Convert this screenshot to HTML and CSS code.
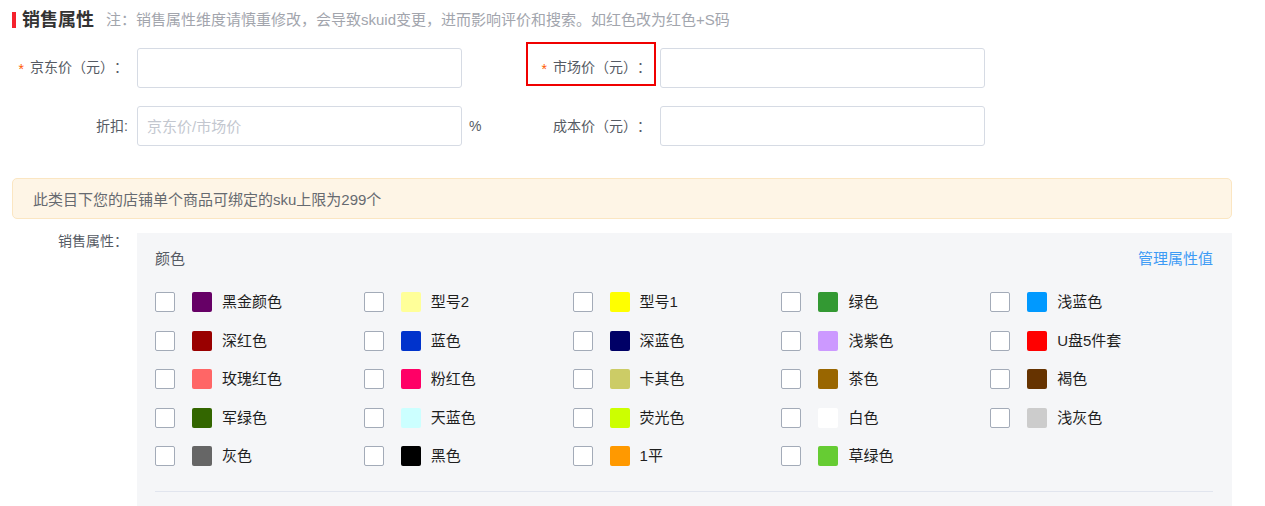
FILE: index.html
```html
<!DOCTYPE html>
<html lang="zh-CN">
<head>
<meta charset="utf-8">
<title>销售属性</title>
<link rel="stylesheet" href="styles.css">
</head>
<body>
<div class="page">
  <div class="title-row">
    <span class="title-bar"></span>
    <span class="title">销售属性</span>
    <span class="note">注：销售属性维度请慎重修改，会导致skuid变更，进而影响评价和搜索。如红色改为红色+S码</span>
  </div>

  <div class="form">
    <div class="form-row">
      <div class="field">
        <label class="label"><span class="star">*</span>京东价（元）：</label>
        <input class="input" type="text">
      </div>
      <div class="suffix"></div>
      <div class="field">
        <label class="label"><span class="star">*</span>市场价（元）：</label>
        <input class="input" type="text">
      </div>
      <div class="highlight"></div>
    </div>
    <div class="form-row">
      <div class="field">
        <label class="label">折扣:</label>
        <input class="input" type="text" placeholder="京东价/市场价">
      </div>
      <div class="suffix">%</div>
      <div class="field">
        <label class="label">成本价（元）：</label>
        <input class="input" type="text">
      </div>
    </div>
  </div>

  <div class="alert">此类目下您的店铺单个商品可绑定的sku上限为299个</div>

  <div class="attr-row">
    <div class="label attr-label">销售属性：</div>
    <div class="panel">
      <div class="panel-head">
        <span class="panel-title">颜色</span>
        <a class="manage" href="#">管理属性值</a>
      </div>
      <div class="grid">
        <div class="item"><span class="cb"></span><span class="sw" style="background:#660066"></span><span class="name">黑金颜色</span></div>
        <div class="item"><span class="cb"></span><span class="sw" style="background:#ffff99"></span><span class="name">型号2</span></div>
        <div class="item"><span class="cb"></span><span class="sw" style="background:#ffff00"></span><span class="name">型号1</span></div>
        <div class="item"><span class="cb"></span><span class="sw" style="background:#339933"></span><span class="name">绿色</span></div>
        <div class="item"><span class="cb"></span><span class="sw" style="background:#0099ff"></span><span class="name">浅蓝色</span></div>

        <div class="item"><span class="cb"></span><span class="sw" style="background:#990000"></span><span class="name">深红色</span></div>
        <div class="item"><span class="cb"></span><span class="sw" style="background:#0033cc"></span><span class="name">蓝色</span></div>
        <div class="item"><span class="cb"></span><span class="sw" style="background:#000066"></span><span class="name">深蓝色</span></div>
        <div class="item"><span class="cb"></span><span class="sw" style="background:#cc99ff"></span><span class="name">浅紫色</span></div>
        <div class="item"><span class="cb"></span><span class="sw" style="background:#ff0000"></span><span class="name">U盘5件套</span></div>

        <div class="item"><span class="cb"></span><span class="sw" style="background:#ff6666"></span><span class="name">玫瑰红色</span></div>
        <div class="item"><span class="cb"></span><span class="sw" style="background:#ff0066"></span><span class="name">粉红色</span></div>
        <div class="item"><span class="cb"></span><span class="sw" style="background:#cccc66"></span><span class="name">卡其色</span></div>
        <div class="item"><span class="cb"></span><span class="sw" style="background:#996600"></span><span class="name">茶色</span></div>
        <div class="item"><span class="cb"></span><span class="sw" style="background:#663300"></span><span class="name">褐色</span></div>

        <div class="item"><span class="cb"></span><span class="sw" style="background:#336600"></span><span class="name">军绿色</span></div>
        <div class="item"><span class="cb"></span><span class="sw" style="background:#ccffff"></span><span class="name">天蓝色</span></div>
        <div class="item"><span class="cb"></span><span class="sw" style="background:#ccff00"></span><span class="name">荧光色</span></div>
        <div class="item"><span class="cb"></span><span class="sw" style="background:#ffffff"></span><span class="name">白色</span></div>
        <div class="item"><span class="cb"></span><span class="sw" style="background:#cccccc"></span><span class="name">浅灰色</span></div>

        <div class="item"><span class="cb"></span><span class="sw" style="background:#666666"></span><span class="name">灰色</span></div>
        <div class="item"><span class="cb"></span><span class="sw" style="background:#000000"></span><span class="name">黑色</span></div>
        <div class="item"><span class="cb"></span><span class="sw" style="background:#ff9900"></span><span class="name">1平</span></div>
        <div class="item"><span class="cb"></span><span class="sw" style="background:#66cc33"></span><span class="name">草绿色</span></div>
      </div>
      <div class="divider"></div>
    </div>
  </div>
</div>
</body>
</html>
```

FILE: styles.css
```css
* { box-sizing: border-box; }

html, body {
  margin: 0;
  padding: 0;
  background: #ffffff;
}

body {
  font-family: "Liberation Sans", "Noto Sans CJK SC", sans-serif;
  font-size: 14px;
  color: #333333;
  text-spacing-trim: space-all;
}

.page {
  padding: 9px 33px 0 12px;
  width: 1265px;
  height: 506px;
  overflow: hidden;
}

.title-row {
  display: flex;
  align-items: center;
  height: 22px;
}

.title-bar {
  width: 4px;
  height: 16px;
  background: #f5222d;
  margin-right: 6px;
}

.title {
  font-size: 18px;
  font-weight: bold;
  color: #333333;
  line-height: 22px;
}

.note {
  margin-left: 12px;
  font-size: 15px;
  color: #a2a5ad;
  line-height: 22px;
}

.form {
  margin-top: 17px;
  display: flex;
  flex-direction: column;
  gap: 18px;
}

.form-row {
  position: relative;
  display: flex;
  align-items: center;
  height: 40px;
}

.field {
  display: flex;
  align-items: center;
  gap: 9px;
}

.label {
  width: 116px;
  text-align: right;
  color: #555a63;
  font-size: 14px;
  line-height: 20px;
  white-space: nowrap;
}

.star {
  color: #ff5a00;
  margin-right: 6px;
  vertical-align: -2px;
}

.input {
  width: 325px;
  height: 40px;
  border: 1px solid #d6dbe4;
  border-radius: 3px;
  background: #ffffff;
  padding: 0 9px;
  font-family: inherit;
  font-size: 15px;
  color: #333333;
  outline: none;
}

.input::placeholder {
  color: #c3c7cf;
}

.suffix {
  width: 73px;
  padding-left: 7px;
  color: #555a63;
  font-size: 14px;
}

.highlight {
  position: absolute;
  left: 514px;
  top: -6px;
  width: 130px;
  height: 44px;
  border: 2px solid #f00000;
  pointer-events: none;
}

.alert {
  margin-top: 32px;
  height: 41px;
  border: 1px solid #fbe6c2;
  background: #fef5e6;
  border-radius: 5px;
  padding-left: 20px;
  display: flex;
  align-items: center;
  color: #666a70;
  font-size: 15px;
}

.attr-row {
  margin-top: 14px;
  display: flex;
  gap: 9px;
}

.attr-label {
  line-height: 16px;
}

.panel {
  flex: 1;
  background: #f5f6f8;
  padding: 14px 19px 40px 18px;
}

.panel-head {
  display: flex;
  justify-content: space-between;
  align-items: center;
  height: 20px;
}

.panel-title {
  color: #555a63;
  font-size: 15px;
}

.manage {
  color: #3d9bf5;
  text-decoration: none;
  font-size: 15px;
}

.grid {
  margin-top: 25px;
  display: grid;
  grid-template-columns: repeat(5, 208.8px);
  row-gap: 18.6px;
}

.item {
  display: flex;
  align-items: center;
  height: 20px;
}

.cb {
  width: 20px;
  height: 20px;
  border: 1px solid #a3abb8;
  border-radius: 2px;
  background: #ffffff;
  margin-right: 17px;
  flex: none;
}

.sw {
  width: 20px;
  height: 20px;
  border-radius: 2px;
  margin-right: 10px;
  flex: none;
}

.name {
  color: #1f1f1f;
  font-size: 15px;
  white-space: nowrap;
  line-height: 18px;
}

.divider {
  margin-top: 25px;
  height: 1px;
  background: #e1e5ee;
}
```
